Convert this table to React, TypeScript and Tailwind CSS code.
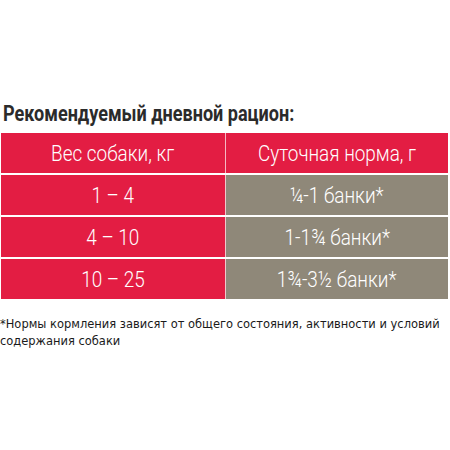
const rows = [
  { w: "1 – 4", n: "¼-1 банки*" },
  { w: "4 – 10", n: "1-1¾ банки*" },
  { w: "10 – 25", n: "1¾-3½ банки*" },
]

const cell = "font-['Roboto','Liberation_Sans',sans-serif] font-light text-white text-[22px] flex items-center justify-center"

function Txt({ children }: { children: React.ReactNode }) {
  return <span className="inline-block scale-x-[0.86] whitespace-nowrap">{children}</span>
}

export default function App() {
  return (
    <div className="w-[450px] h-[450px] bg-white pt-[101px]">
      <h2 className="pl-[3px] h-[26px] leading-[26px]">
        <span className="inline-block origin-left scale-x-[0.82] whitespace-nowrap font-['Roboto','Liberation_Sans',sans-serif] text-[22px] font-bold text-[#2b2b2b]">
          Рекомендуемый дневной рацион:
        </span>
      </h2>
      <div className="mt-[6px] ml-px w-[447px] flex flex-col gap-[2px] bg-white">
        <div className="grid grid-cols-[224px_1fr] gap-[1px] h-[40px] bg-[#f5b8c2]">
          <div className={`${cell} bg-[#e31d43]`}>
            <Txt>Вес собаки, кг</Txt>
          </div>
          <div className={`${cell} bg-[#e31d43]`}>
            <Txt>Суточная норма, г</Txt>
          </div>
        </div>
        {rows.map((r) => (
          <div key={r.w} className="grid grid-cols-[224px_1fr] gap-[1px] h-[40px] bg-[#f0c8cc]">
            <div className={`${cell} bg-[#e31d43]`}>
              <Txt>{r.w}</Txt>
            </div>
            <div className={`${cell} bg-[#8f8879]`}>
              <Txt>{r.n}</Txt>
            </div>
          </div>
        ))}
      </div>
      <p className="mt-[16px] font-['DejaVu_Sans_Condensed','DejaVu_Sans',sans-serif] text-[12.75px] leading-[17px] text-[#1a1a1a]">
        *Нормы кормления зависят от общего состояния, активности и условий содержания собаки
      </p>
    </div>
  )
}
